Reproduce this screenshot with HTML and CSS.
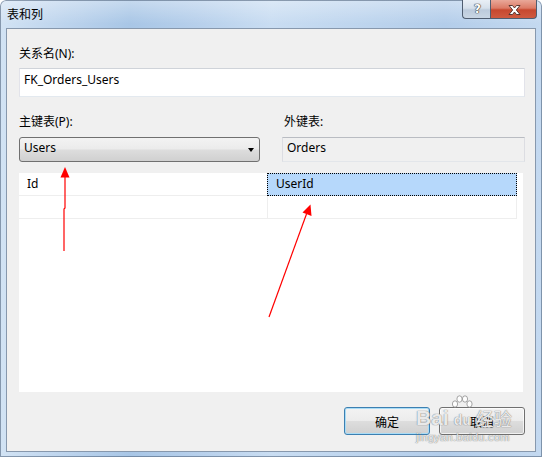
FILE: index.html
```html
<!DOCTYPE html>
<html lang="zh-CN">
<head>
<meta charset="utf-8">
<title>表和列</title>
<link rel="stylesheet" href="styles.css">
</head>
<body>
<div class="window">
  <div class="titlebar">
    <span class="title">表和列</span>
    <div class="caption">
      <div class="cap-help"><span>?</span></div>
      <div class="cap-close">
        <svg width="13" height="10" viewBox="0 0 13 10"><path d="M1 0.5 H4.5 L6.5 3 L8.5 0.5 H12 L8.3 5 L12 9.5 H8.5 L6.5 7 L4.5 9.5 H1 L4.7 5 Z" fill="#fff" stroke="#4a2b27" stroke-width="0.9" stroke-linejoin="round"/></svg>
      </div>
    </div>
  </div>
  <div class="client">
    <div class="label">关系名(N):</div>
    <div class="textbox">FK_Orders_Users</div>
    <div class="tables">
      <div class="col">
        <div class="label">主键表(P):</div>
        <div class="combo"><span>Users</span><span class="arrow"></span></div>
      </div>
      <div class="col col-right">
        <div class="label label-indent">外键表:</div>
        <div class="readonly">Orders</div>
      </div>
    </div>
    <div class="grid">
      <div class="row">
        <div class="cell">Id</div>
        <div class="cell sel">UserId</div>
      </div>
      <div class="row">
        <div class="cell"></div>
        <div class="cell"></div>
      </div>
    </div>
    <div class="buttons">
      <div class="btn btn-default">确定</div>
      <div class="btn">取消</div>
    </div>
  </div>

  <div class="watermark">
    <div class="wm-top">
      <span class="wm-bai">Bai</span>
      <span class="wm-paw">
        <svg width="22" height="20" viewBox="0 0 22 20">
          <g fill="rgba(255,255,255,0.9)" stroke="rgba(130,130,130,0.7)" stroke-width="1">
            <ellipse cx="4" cy="9" rx="2.6" ry="3.2"/>
            <ellipse cx="8.5" cy="4" rx="2.6" ry="3.2"/>
            <ellipse cx="14" cy="4" rx="2.6" ry="3.2"/>
            <ellipse cx="18.5" cy="9" rx="2.6" ry="3.2"/>
          </g>
        </svg>
        <span class="wm-du">du</span>
      </span>
      <span class="wm-jy">经验</span>
    </div>
    <div class="wm-url">jingyan.baidu.com</div>
  </div>

  <svg class="arrows" width="542" height="457" viewBox="0 0 542 457">
    <g stroke="#ff0000" stroke-width="1.2" fill="none">
      <polyline points="64,251 64,209 65,208 65,176"/>
      <line x1="269" y1="317" x2="306.5" y2="214"/>
    </g>
    <g fill="#ff0000">
      <polygon points="65,167 60.5,177.5 69.5,177.5"/>
      <polygon points="310.5,204.5 311.5,216 302.5,212.5"/>
    </g>
  </svg>
</div>
</body>
</html>
```
FILE: styles.css
```css
* {
  box-sizing: border-box;
  margin: 0;
  padding: 0;
}

html, body {
  width: 542px;
  height: 457px;
  overflow: hidden;
  background: #ffffff;
}

body {
  font-family: "Noto Sans", "Noto Sans CJK SC", sans-serif;
  font-size: 12px;
  color: #000;
}

.window {
  position: relative;
  width: 542px;
  height: 457px;
  padding: 0 6px 5px 6px;
  display: flex;
  flex-direction: column;
  border-radius: 6px 6px 0 0;
  background:
    linear-gradient(180deg, rgba(255,255,255,0.35) 0px, rgba(255,255,255,0) 24px),
    linear-gradient(90deg, #d2e3f4 0%, #c0d6ee 10%, #a8c6e6 24%, #b6cfeb 36%, #c9ddf2 50%, #bed5ee 66%, #b3cdea 82%, #c4d9f0 100%);
  box-shadow: inset 0 0 0 1px rgba(70, 90, 115, 0.55);
}

/* title bar */
.titlebar {
  height: 28px;
  display: flex;
  justify-content: space-between;
  align-items: flex-start;
}

.title {
  margin-left: 1px;
  margin-top: 6px;
  font-family: "Noto Sans CJK SC", sans-serif;
  font-size: 12px;
  line-height: 16px;
  color: #000;
}

.caption {
  display: flex;
  margin-right: -1px;
}

.cap-help,
.cap-close {
  height: 19px;
  display: flex;
  align-items: center;
  justify-content: center;
  border: 1px solid #4f5d70;
  border-top: none;
}

.cap-help {
  width: 28px;
  border-right: none;
  border-radius: 0 0 0 4px;
  background: linear-gradient(180deg, #e9eff6 0%, #d6e0eb 45%, #bccbdc 55%, #c9d6e4 100%);
}

.cap-help span {
  font-family: "DejaVu Sans", sans-serif;
  font-weight: bold;
  font-size: 12px;
  line-height: 12px;
  color: #fff;
  margin-left: 2px;
  text-shadow: 0 0 1px #333, 0 0 1px #333, 0 0 1px #333;
}

.cap-close {
  width: 47px;
  border-radius: 0 0 4px 0;
  background: linear-gradient(180deg, #e9a899 0%, #dc7b66 45%, #c7482f 55%, #cf5a40 100%);
}

.cap-close svg {
  margin-top: 2px;
  margin-left: 2px;
}

/* client */
.client {
  flex: 1;
  display: flex;
  flex-direction: column;
  background: #f0f0f0;
  border: 1px solid #8798ad;
  padding: 17px 10px 16px 12px;
}

.label {
  height: 16px;
  line-height: 16px;
  font-size: 12px;
  color: #000;
}

.label-indent {
  padding-left: 2px;
}

.textbox {
  margin-top: 6px;
  height: 29px;
  line-height: 21px;
  padding: 0 4px;
  background: #fff;
  border: 1px solid;
  border-color: #cfd3d9 #e2e3ea #e3e9ef #e2e3ea;
}

.tables {
  margin-top: 17px;
  display: flex;
  gap: 22px;
}

.col {
  width: 241px;
  display: flex;
  flex-direction: column;
}

.col-right {
  width: 243px;
}

.combo {
  margin-top: 7px;
  height: 25px;
  border: 1px solid #707070;
  border-radius: 3px;
  padding: 0 5px 0 4px;
  line-height: 20px;
  display: flex;
  justify-content: space-between;
  background: linear-gradient(180deg, #f3f3f3 0%, #ebebeb 48%, #dddddd 52%, #d0d0d0 100%);
}

.arrow {
  width: 0;
  height: 0;
  margin-top: 10px;
  border-left: 3.5px solid transparent;
  border-right: 3.5px solid transparent;
  border-top: 4px solid #000;
}

.readonly {
  margin-top: 7px;
  height: 25px;
  line-height: 19px;
  padding: 0 4px;
  background: #f0f0f0;
  border: 1px solid;
  border-color: #b9bcc2 #dcdde2 #e3e6ea #dcdde2;
}

/* grid */
.grid {
  margin-top: 11px;
  margin-right: 2px;
  flex: 1;
  background: #fff;
}

.row {
  display: flex;
}

.cell {
  width: 249px;
  height: 23px;
  line-height: 21px;
  padding-left: 8px;
  border-right: 1px solid #eeeeee;
  border-bottom: 1px solid #eeeeee;
}

.cell.sel {
  width: 250px;
  margin-left: -1px;
  background: #b6d8fb;
  border: 1px dotted #000;
  line-height: 20px;
}

/* buttons */
.buttons {
  margin-top: 15px;
  display: flex;
  justify-content: flex-end;
  gap: 9px;
}

.btn {
  width: 86px;
  height: 28px;
  display: flex;
  align-items: center;
  justify-content: center;
  font-family: "Noto Sans CJK SC", sans-serif;
  font-size: 12px;
  border: 1px solid #707070;
  border-radius: 3px;
  background: linear-gradient(180deg, #f3f3f3 0%, #ececec 48%, #dddddd 52%, #d0d0d0 100%);
  box-shadow: inset 0 0 0 1px rgba(255,255,255,0.7);
}

.btn-default {
  border-color: #3c7fb1;
  box-shadow: inset 0 0 0 1px #a9dcf6;
}

/* watermark overlay */
.watermark {
  position: absolute;
  left: 416px;
  top: 395px;
  display: flex;
  flex-direction: column;
  color: rgba(255, 255, 255, 0.85);
  text-shadow: 0 0 1px rgba(110, 110, 110, 0.9), 0 0 1px rgba(110, 110, 110, 0.6);
  pointer-events: none;
}

.wm-top {
  display: flex;
  align-items: flex-end;
  height: 34px;
}

.wm-bai {
  font-family: "Liberation Sans", sans-serif;
  font-weight: bold;
  font-size: 21px;
  line-height: 20px;
  margin-bottom: 1px;
}

.wm-paw {
  position: relative;
  width: 22px;
  height: 34px;
  margin-left: 2px;
}

.wm-paw svg {
  position: absolute;
  left: 0;
  top: 0;
}

.wm-du {
  position: absolute;
  left: 3px;
  bottom: 2px;
  font-family: "Liberation Sans", sans-serif;
  font-weight: bold;
  font-size: 14px;
  line-height: 14px;
}

.wm-jy {
  font-family: "Noto Sans CJK SC", sans-serif;
  font-size: 18px;
  line-height: 20px;
  margin-left: 3px;
  margin-bottom: 1px;
}

.wm-url {
  font-family: "Liberation Sans", sans-serif;
  font-size: 11px;
  line-height: 12px;
  margin-top: 2px;
  letter-spacing: 0.3px;
}

.arrows {
  position: absolute;
  left: 0;
  top: 0;
  pointer-events: none;
}
```
